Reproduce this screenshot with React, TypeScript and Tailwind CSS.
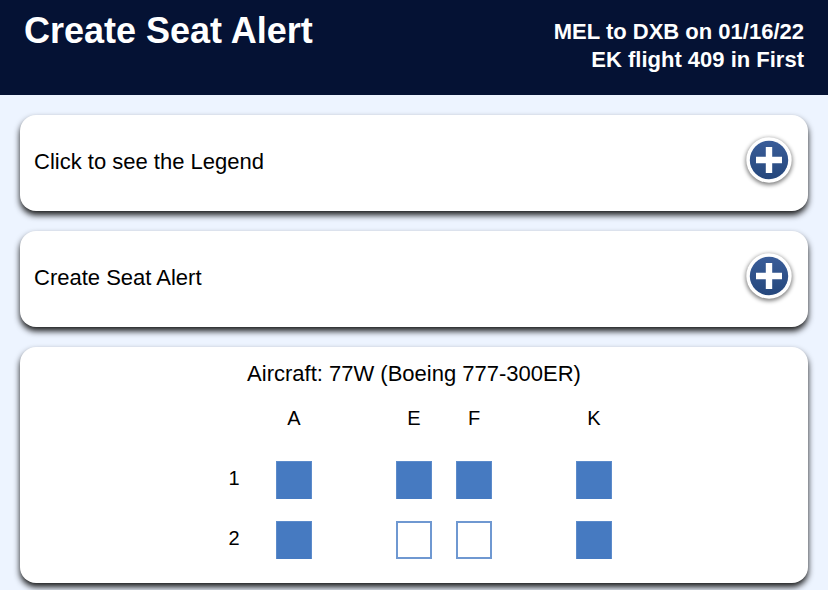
import { useState } from "react";

const columns = ["A", "", "E", "F", "", "K"];

const rows = [
  { number: 1, seats: ["filled", "aisle", "filled", "filled", "aisle", "filled"] },
  { number: 2, seats: ["filled", "aisle", "open", "open", "aisle", "filled"] },
];

const card = "rounded-2xl bg-white shadow-[0_4px_6px_rgba(0,0,0,0.9)]";

function PlusIcon() {
  return (
    <svg viewBox="0 0 56 56" className="size-14 shrink-0" aria-hidden="true">
      <defs>
        <linearGradient id="disc" x1="0" y1="0" x2="0" y2="1">
          <stop offset="0" stopColor="#3a5d99" />
          <stop offset="1" stopColor="#25477c" />
        </linearGradient>
        <filter id="soft" x="-20%" y="-20%" width="140%" height="140%">
          <feGaussianBlur stdDeviation="2" />
        </filter>
      </defs>
      <circle cx="28" cy="27.5" r="23.5" fill="#000" opacity="0.5" filter="url(#soft)" />
      <circle cx="28" cy="26" r="22.7" fill="#fff" />
      <circle cx="28" cy="26" r="19.2" fill="url(#disc)" />
      <path d="M24.8 13h6.4v9.8H41v6.4h-9.8V39h-6.4v-9.8H15v-6.4h9.8z" fill="#fff" />
    </svg>
  );
}

function Panel({ title }: { title: string }) {
  const [open, setOpen] = useState(false);
  return (
    <section className={card}>
      <button
        type="button"
        aria-expanded={open}
        onClick={() => setOpen(!open)}
        className="flex h-24 w-full items-center justify-between pr-[11px] pb-0.5 pl-3.5 text-left text-[22px] leading-7"
      >
        <span>{title}</span>
        <PlusIcon />
      </button>
    </section>
  );
}

function Seat({ name, kind }: { name: string; kind: string }) {
  if (kind === "aisle") return null;
  return (
    <span
      role="img"
      aria-label={name}
      className={
        kind === "filled"
          ? "mx-auto block h-[38px] w-9 border border-b-0 border-[#5c8bcb] bg-[#467ac1]"
          : "mx-auto block h-[38px] w-9 border-2 border-[#6f98d1] bg-white"
      }
    />
  );
}

export default function App() {
  return (
    <div className="min-h-screen bg-[#edf4ff] font-['Liberation_Sans',Arial,sans-serif] text-black">
      <header className="flex h-[95px] items-start justify-between bg-[#051234] px-6 font-bold text-white">
        <h1 className="pt-[11px] text-4xl leading-10">Create Seat Alert</h1>
        <p className="pt-[18px] text-right text-[22px] leading-7">
          MEL to DXB on 01/16/22
          <br />
          EK flight 409 in First
        </p>
      </header>

      <main className="flex flex-col gap-5 p-5">
        <Panel title="Click to see the Legend" />
        <Panel title="Create Seat Alert" />

        <section className={`${card} px-3 pt-[13px] pb-[15px]`}>
          <h2 id="aircraft" className="text-center text-[22px] leading-7">
            Aircraft: 77W (Boeing 777-300ER)
          </h2>
          <table aria-labelledby="aircraft" className="mx-auto w-[420px] table-fixed text-center text-xl">
            <thead>
              <tr className="h-15">
                <td />
                {columns.map((column, i) =>
                  column ? (
                    <th key={i} scope="col" className="font-normal">
                      {column}
                    </th>
                  ) : (
                    <td key={i} />
                  ),
                )}
              </tr>
            </thead>
            <tbody>
              {rows.map((row) => (
                <tr key={row.number} className="h-15">
                  <th scope="row" className="font-normal">
                    {row.number}
                  </th>
                  {row.seats.map((kind, i) => (
                    <td key={i} className="pt-1">
                      <Seat name={`Seat ${row.number}${columns[i]}`} kind={kind} />
                    </td>
                  ))}
                </tr>
              ))}
            </tbody>
          </table>
        </section>
      </main>
    </div>
  );
}
